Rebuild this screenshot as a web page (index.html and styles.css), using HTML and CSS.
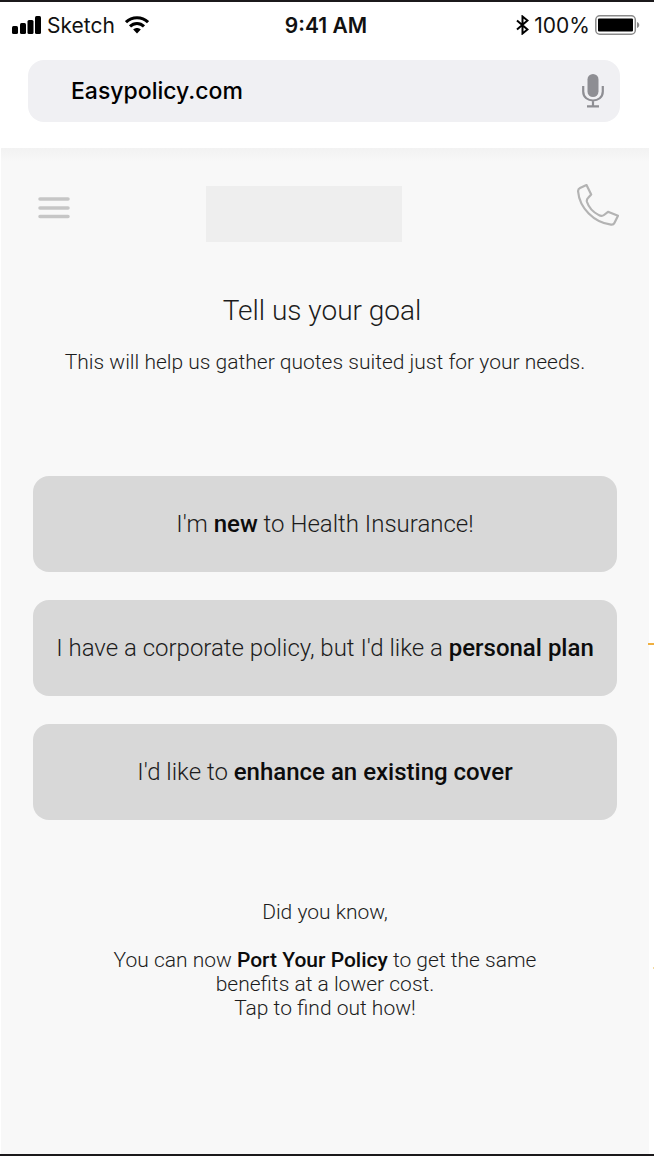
FILE: index.html
```html
<!DOCTYPE html>
<html lang="en">
<head>
    <meta charset="UTF-8">
    <meta name="viewport" content="width=device-width, initial-scale=1.0">
    <title>Easypolicy.com</title>
    <link rel="stylesheet" href="styles.css">
</head>
<body>
    <!-- Phone status bar -->
    <div class="status-bar">
        <div class="status-left">
            <svg width="29" height="18" viewBox="0 0 29 18" aria-hidden="true">
                <rect x="0" y="10" width="6" height="8" rx="1.5"/>
                <rect x="8" y="7" width="6" height="11" rx="1.5"/>
                <rect x="15.5" y="4" width="6" height="14" rx="1.5"/>
                <rect x="23" y="0" width="6" height="18" rx="1.5"/>
            </svg>
            <span>Sketch</span>
            <svg class="wifi" width="24" height="18" viewBox="0 0 24 18" fill="none" stroke="#000" stroke-width="3" aria-hidden="true">
                <path d="M1 6.2C7 .2 17 .2 23 6.2"/>
                <path d="M5 10.4c4-3.9 10-3.9 14 0"/>
                <path d="M8.2 13.6c2.2-2 5.4-2 7.6 0L12 17.4z" fill="#000" stroke="none"/>
            </svg>
        </div>
        <div class="status-time">9:41 AM</div>
        <div class="status-right">
            <svg width="13" height="20" viewBox="0 0 13 20" fill="none" stroke="#000" stroke-width="2" aria-hidden="true">
                <path d="M1 5.5l10.5 9L6.5 18.5V1.5l5 4L1 14.5"/>
            </svg>
            <span>100%</span>
            <svg width="45" height="20" viewBox="0 0 45 20" aria-hidden="true">
                <rect x=".8" y=".8" width="39.5" height="18.4" rx="4" fill="#fff" stroke="#8a8a8a" stroke-width="1.5"/>
                <rect x="3" y="3.5" width="35" height="13" rx="1"/>
                <path d="M42 7c3 1 3 5 0 6z" fill="#8a8a8a"/>
            </svg>
        </div>
    </div>

    <!-- Browser address bar -->
    <div class="address-bar">
        <input type="text" class="address" value="Easypolicy.com" aria-label="Address">
        <button type="button" class="icon-btn" aria-label="Voice search">
            <svg width="22" height="34" viewBox="0 0 22 34" fill="none" stroke="#8e8e93" stroke-width="2.2">
                <rect x="5.500" y="0" width="11" height="23" rx="5.500" fill="#8e8e93" stroke="none"/>
                <path d="M1.2 12v5.500c0 12 19.600 12 19.600 0V12M11 26.500V32M5 32.300h12"/>
            </svg>
        </button>
    </div>

    <main class="page">
        <header class="page-header">
            <button type="button" class="icon-btn" aria-label="Menu">
                <svg width="32" height="22" viewBox="0 0 32 22" fill="none" stroke="#c6c6c6" stroke-width="3.500" stroke-linecap="round">
                    <path d="M2 2h28M2 11h28M2 19.500h28"/>
                </svg>
            </button>
            <div class="brand"></div>
            <a href="#call" class="call" aria-label="Call us">
                <svg width="42" height="42" viewBox="0 0 42 42" fill="none" stroke="#b3b3b3" stroke-width="2.2" stroke-linejoin="round">
                    <path d="M9.500 1L3 4C1.500 4.700 1 5.800 1.100 7.500C2.500 24 17 38.500 34 40.600C35.600 40.800 36.800 40.300 37.400 39L41 31.800L31 27.800L27 31C25.500 32.200 23.500 32.100 21.500 30.900C16 28 11.500 22.500 10 18C9.500 16.300 10 15 11.200 13.800L14.200 10.500z"/>
                </svg>
            </a>
        </header>

        <h1>Tell us your goal</h1>
        <p class="intro">This will help us gather quotes suited just for your needs.</p>

        <div class="goals">
            <button type="button" class="goal">I'm <strong>new</strong> to Health Insurance!</button>
            <button type="button" class="goal marked">I have a corporate policy, but I'd like a <strong>personal plan</strong></button>
            <button type="button" class="goal">I'd like to <strong>enhance an existing cover</strong></button>
        </div>

        <a href="#port" class="tip marked">
            <p>Did you know,</p>
            <p>You can now <strong>Port Your Policy</strong> to get the same<br>
            benefits at a lower cost.<br>
            Tap to find out how!</p>
        </a>
    </main>
</body>
</html>
```
FILE: styles.css
```css
* {
    box-sizing: border-box;
}

body {
    margin: 0;
    min-height: 100vh;
    display: flex;
    flex-direction: column;
    border-top: 2px solid #1b191b;
    border-bottom: 2px solid #1b191b;
    background: #fff;
    color: #1c1c1c;
    font-family: Roboto, sans-serif;
    font-weight: 300;
    overflow-x: hidden;
}

strong {
    font-weight: 500;
    color: #0c0c0c;
}

.icon-btn {
    display: flex;
    padding: 0;
    border: 0;
    background: none;
}

/* Status bar */
.status-bar {
    display: grid;
    grid-template-columns: 1fr auto 1fr;
    align-items: center;
    height: 46px;
    padding: 0 14px 0 12px;
    font-family: Inter, sans-serif;
    font-size: 21px;
    font-weight: 400;
    color: #111;
}

.status-left,
.status-right {
    display: flex;
    align-items: center;
    gap: 6px;
}

.status-right {
    justify-content: flex-end;
    gap: 5px;
}

.wifi {
    margin-left: 4px;
}

.status-time {
    font-weight: 600;
}

/* Address bar */
.address-bar {
    display: flex;
    align-items: center;
    height: 62px;
    margin: 12px 34px 26px 28px;
    padding: 0 16px 0 43px;
    border-radius: 16px;
    background: #f0f0f3;
}

.address {
    flex: 1;
    min-width: 0;
    padding: 0;
    border: 0;
    background: none;
    font-family: Inter, sans-serif;
    font-size: 23px;
    font-weight: 500;
    color: #000;
}

/* Page */
.page {
    flex: 1;
    margin: 0 5px 0 1px;
    padding: 38px 32px;
    background: linear-gradient(#f2f2f2, #f8f8f8 14px);
    text-align: center;
}

.page-header {
    display: grid;
    grid-template-columns: 7fr 196px 9fr;
    margin-right: -2px;
    padding-left: 5px;
}

.page-header .icon-btn {
    align-self: start;
    padding-top: 11px;
}

.brand {
    height: 56px;
    background: #eee;
}

.call {
    justify-self: end;
    height: 42px;
    margin-top: -2px;
}

h1 {
    margin: 51px 6px 0 0;
    font-size: 28px;
    line-height: 36px;
    font-weight: 300;
}

.intro {
    margin: 19px 0 0;
    font-size: 21px;
    line-height: 28px;
}

.goals {
    display: grid;
    gap: 28px;
    margin-top: 100px;
}

.goal {
    min-height: 96px;
    padding: 0 16px;
    border: 0;
    border-radius: 16px;
    background: #d8d8d8;
    color: inherit;
    font: inherit;
    font-size: 24px;
}

/* Connectors at the right edge of the screen */
.marked {
    position: relative;
}

.marked::after {
    content: "";
    position: absolute;
    left: calc(100% + 31px);
    top: 43px;
    width: 6px;
    height: 2px;
    background: #f0b040;
}

.tip {
    display: block;
    margin-top: 80px;
    color: inherit;
    font-size: 21px;
    line-height: 24px;
    text-decoration: none;
}

.tip.marked::after {
    left: calc(100% + 36px);
    top: 67px;
    width: 1px;
    background: #f3d9a0;
}

.tip p {
    margin: 0 0 24px;
}
```
